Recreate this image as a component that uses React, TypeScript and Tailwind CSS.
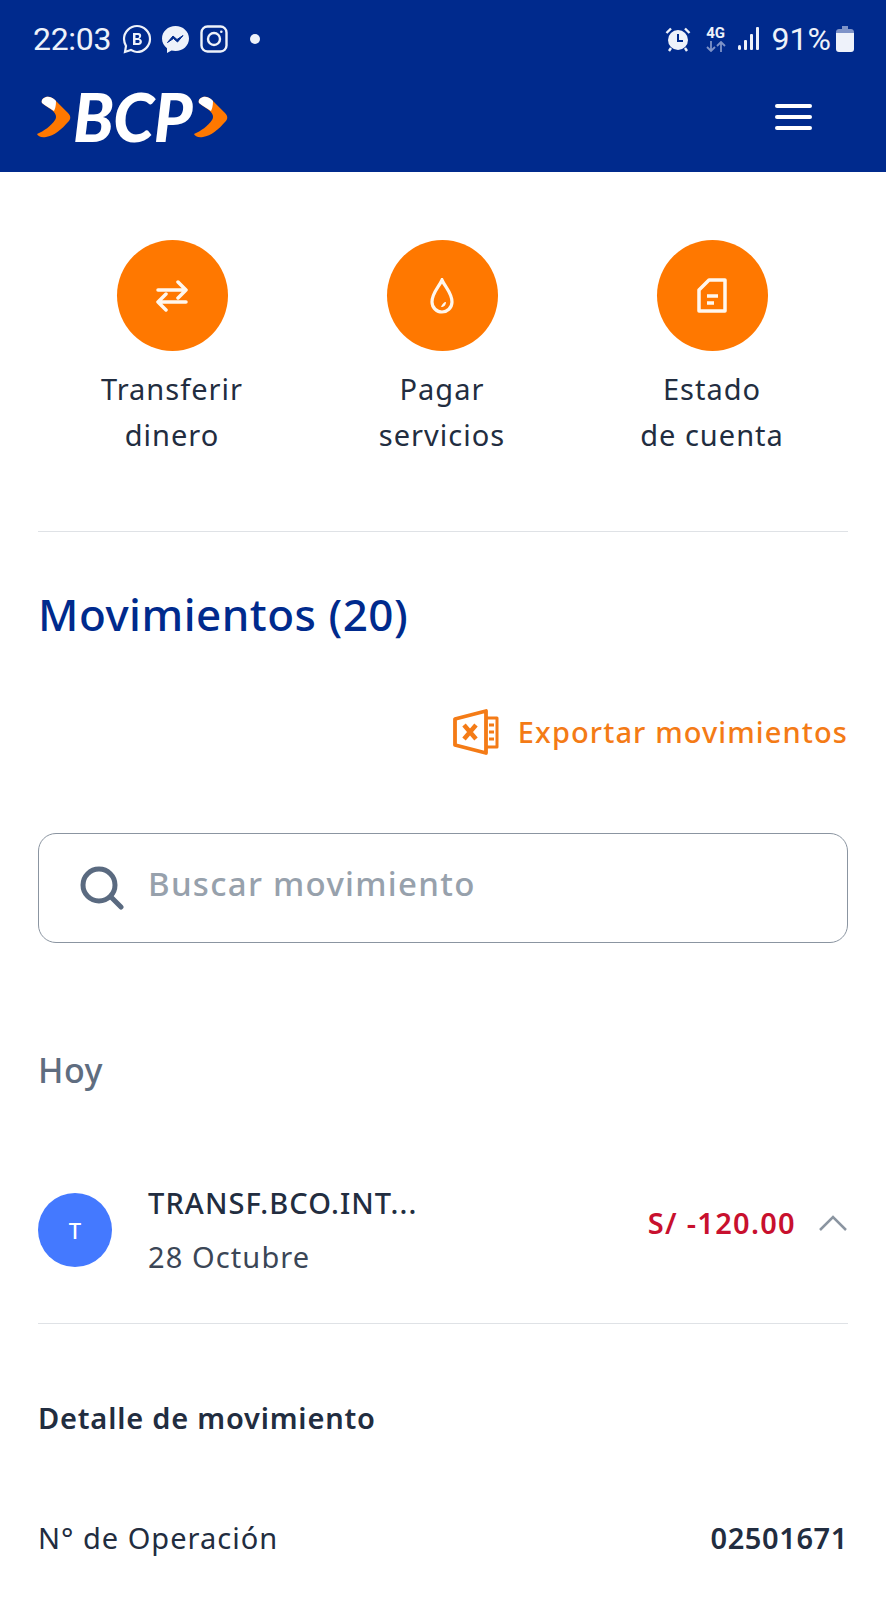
const font = { fontFamily: '"Noto Sans", sans-serif' };

function BcpChevron() {
  return (
    <svg width="34" height="42" viewBox="0 0 34 42" className="block">
      <path d="M9 1 C14 0 17 3 20 6 L31 17 C34 20 34 23 31 26 C25 33 17 40 9 41 C4 42 1 40 0 38 C7 35 14 30 18 24 C20 21 19 18 16 15 C13 12 8 10 5 7 C4 4 6 2 9 1 Z" fill="#ff7800" />
      <path d="M9 1 C14 0 17 3 19 5 C19 10 18 13 17 15 C13 12 8 10 5 7 C4 4 6 2 9 1 Z" fill="#ffffff" />
    </svg>
  );
}

function StatusBar() {
  return (
    <div className="flex h-[80px] items-center justify-between pl-[33px] pr-[32px] pb-[2px] text-[#eef2fa]">
      <div className="flex items-center">
        <span className="text-[32px] leading-none tracking-[-0.3px]" style={{ fontFamily: "Roboto, sans-serif" }}>22:03</span>
        <svg width="30" height="30" viewBox="0 0 30 30" className="ml-[11px]">
          <path d="M15 2 C8 2 2 8 2 15 C2 18 3 20 4 22 L3 28 L9 26 C11 27 13 28 15 28 C22 28 28 22 28 15 C28 8 22 2 15 2 Z" fill="none" stroke="currentColor" strokeWidth="2.2" />
          <path d="M11 9 H16.5 C20 9 20 14 17 14.6 C21 15 21 21 16.5 21 H11 Z M13.5 11 V14 H16 C17.5 14 17.5 11 16 11 Z M13.5 16 V19 H16.5 C18 19 18 16 16.5 16 Z" fill="currentColor" fillRule="evenodd" />
        </svg>
        <svg width="29" height="29" viewBox="0 0 29 29" className="ml-[9px]">
          <path d="M14.5 1 C7 1 1 6.500 1 13.500 C1 17.500 3 21 6 23.300 V28 L10.500 25.500 C11.800 25.800 13 26 14.500 26 C22 26 28 20.500 28 13.500 C28 6.500 22 1 14.500 1 Z" fill="currentColor" />
          <path d="M6.500 17.500 L12 11 L16 14.500 L22 10.500 L16.500 17 L12.500 13.500 Z" fill="#002a8d" stroke="#002a8d" strokeWidth="1" />
        </svg>
        <svg width="28" height="28" viewBox="0 0 28 28" className="ml-[10px]" fill="none" stroke="currentColor" strokeWidth="2.4">
          <rect x="1.500" y="1.500" width="25" height="25" rx="6" />
          <circle cx="14" cy="14" r="6" />
          <circle cx="21.300" cy="6.700" r="1.300" fill="currentColor" stroke="none" />
        </svg>
        <div className="ml-[22px] h-[10px] w-[10px] rounded-full bg-[#eef2fa]" />
      </div>
      <div className="flex items-center">
        <svg width="26" height="26" viewBox="0 0 26 26">
          <circle cx="13" cy="14" r="10" fill="currentColor" />
          <path d="M1.500 7 L6 2.500 M24.500 7 L20 2.500 M6 22 L4 25 M20 22 L22 25" stroke="currentColor" strokeWidth="2.4" />
          <path d="M13 8 V15 H18" fill="none" stroke="#002a8d" strokeWidth="2" />
        </svg>
        <div className="ml-[14px] flex w-[22px] flex-col items-center">
          <span className="text-[15px] font-bold leading-[15px]" style={{ fontFamily: "Roboto, sans-serif" }}>4G</span>
          <svg width="20" height="11" viewBox="0 0 20 11" fill="none" stroke="#7e93c8" strokeWidth="1.800">
            <path d="M5 0 V10 M1 6 L5 10 L9 6" />
            <path d="M15 11 V1 M11 5 L15 1 L19 5" />
          </svg>
        </div>
        <svg width="24" height="26" viewBox="0 0 24 26" className="ml-[10px]" fill="currentColor">
          <rect x="1" y="19" width="3" height="5" rx="1.500" />
          <rect x="7" y="14" width="3" height="10" rx="1" />
          <rect x="13" y="8" width="3" height="16" rx="1" />
          <rect x="19" y="1" width="3" height="23" rx="1" />
        </svg>
        <span className="ml-[11px] text-[32px] leading-none" style={{ fontFamily: "Roboto, sans-serif" }}>91%</span>
        <svg width="18" height="26" viewBox="0 0 18 26" className="ml-[5px]">
          <path d="M6 0 H12 V3 H15 C16.500 3 18 4 18 6 V8 H0 V6 C0 4 1.500 3 3 3 H6 Z" fill="#7e93c8" />
          <path d="M0 7 H18 V23 C18 25 17 26 15 26 H3 C1 26 0 25 0 23 Z" fill="currentColor" />
        </svg>
      </div>
    </div>
  );
}

function Header() {
  return (
    <header className="h-[172px] bg-[#002a8d]">
      <StatusBar />
      <div className="flex h-[74px] items-center justify-between pl-[37px] pr-[74px]">
        <div className="flex items-center">
          <BcpChevron />
          <span className="ml-[2px] pr-[2px] text-[66px] font-black italic leading-none tracking-[-0.5px] text-white" style={{ fontFamily: "Lato, sans-serif" }}>BCP</span>
          <BcpChevron />
        </div>
        <div className="flex w-[37px] flex-col gap-[7px]">
          <div className="h-[4px] rounded-full bg-white" />
          <div className="h-[4px] rounded-full bg-white" />
          <div className="h-[4px] rounded-full bg-white" />
        </div>
      </div>
    </header>
  );
}

function ActionItem({ icon, lines }: { icon: React.ReactNode; lines: string[] }) {
  return (
    <div className="flex w-[230px] flex-col items-center">
      <div className="flex h-[111px] w-[111px] items-center justify-center rounded-full bg-[#ff7800]">{icon}</div>
      <div className="mt-[15px] text-center text-[29px] leading-[46px] tracking-[1px] text-[#222d40]">
        {lines.map((l) => (
          <div key={l}>{l}</div>
        ))}
      </div>
    </div>
  );
}

function Row({ label, value }: { label: string; value: string }) {
  return (
    <div className="flex items-center justify-between text-[29px] text-[#222d40]">
      <span className="tracking-[1px]">{label}</span>
      <span className="font-semibold tracking-[0.6px]">{value}</span>
    </div>
  );
}

export default function App() {
  return (
    <div className="h-[1600px] w-[886px] overflow-hidden bg-white" style={font}>
      <Header />
      <main className="px-[38px]">
        <section className="flex justify-between pl-[19px] pr-[21px] pt-[68px] pb-[73px]">
          <ActionItem
            lines={["Transferir", "dinero"]}
            icon={
              <svg width="32" height="32" viewBox="0 0 32 32" fill="none" stroke="#fff7ee" strokeWidth="3.500" strokeLinecap="round" strokeLinejoin="round">
                <path d="M2 10 H30 M22 2 L30 10 L22 18" />
                <path d="M30 22 H2 M10 14 L2 22 L10 30" />
              </svg>
            }
          />
          <ActionItem
            lines={["Pagar", "servicios"]}
            icon={
              <svg width="24" height="36" viewBox="0 0 24 36" fill="none" stroke="#fff7ee" strokeWidth="3.200">
                <path d="M12 2 C15 9 22 15 22 24 C22 30 17 34 12 34 C7 34 2 30 2 24 C2 15 9 9 12 2 Z" />
                <path d="M11 29 C14 29 16 27 16 24 C14 24 12 26 11 29 Z" fill="#fff7ee" stroke="none" />
              </svg>
            }
          />
          <ActionItem
            lines={["Estado", "de cuenta"]}
            icon={
              <svg width="30" height="35" viewBox="0 0 30 35" fill="none" stroke="#fff7ee" strokeWidth="3.500" strokeLinejoin="round">
                <path d="M12 2 H28 V33 H2 V12 Z" />
                <path d="M10 18 H21 M10 25 H17" />
              </svg>
            }
          />
        </section>
        <div className="h-px bg-[#dfe2e6]" />
        <h1 className="mt-[50px] text-[44px] font-medium leading-[64px] tracking-[0.5px] text-[#002a8d]">Movimientos (20)</h1>
        <div className="mt-[63px] flex items-center justify-end">
          <svg width="46" height="46" viewBox="0 0 46 46" fill="none" stroke="#f47b16" strokeWidth="3.800" strokeLinejoin="round">
            <path d="M2 10 L33 2 V44 L2 36 Z" />
            <path d="M33 9 H44 V38 H33 M36 16 H41 M36 23 H41 M36 30 H41" strokeWidth="3" />
            <path d="M11 16 L23 30 M23 16 L11 30" strokeWidth="4.500" />
          </svg>
          <span className="ml-[19px] text-[29px] font-medium leading-[40px] tracking-[1.1px] text-[#f47b16]">Exportar movimientos</span>
        </div>
        <div className="mt-[78px] flex h-[110px] items-center rounded-[18px] border-[1.5px] border-[#8b95a1] pl-[41px]">
          <svg width="44" height="44" viewBox="0 0 44 44" fill="none" stroke="#5a6a80" strokeWidth="5" strokeLinecap="round">
            <circle cx="19" cy="19" r="16" />
            <path d="M31 31 L41 41" />
          </svg>
          <span className="ml-[24px] pb-[8px] text-[33px] font-medium tracking-[1.3px] text-[#97a1ac]">Buscar movimiento</span>
        </div>
        <div className="mt-[102px] text-[34px] font-medium leading-[50px] tracking-[0.5px] text-[#5f6d80]">Hoy</div>
        <div className="mt-[88px] flex items-center border-b border-[#dfe2e6] pb-[46px]">
          <div className="flex h-[74px] w-[74px] shrink-0 items-center justify-center rounded-full bg-[#4479ff] text-[22px] font-medium text-white">T</div>
          <div className="ml-[36px] flex-1">
            <div className="text-[29px] font-medium leading-[40px] tracking-[1.1px] text-[#222d40]">TRANSF.BCO.INT...</div>
            <div className="mt-[14px] text-[29px] leading-[40px] tracking-[1.1px] text-[#3b4656]">28 Octubre</div>
          </div>
          <div className="mb-[14px] flex items-center">
            <span className="text-[29px] font-semibold tracking-[1.3px] text-[#c8102e]">S/ -120.00</span>
            <svg width="30" height="18" viewBox="0 0 30 18" className="ml-[22px]" fill="none" stroke="#8b95a1" strokeWidth="2.500">
              <path d="M2 16 L15 3 L28 16" />
            </svg>
          </div>
        </div>
        <h2 className="mt-[71px] text-[29px] font-semibold leading-[46px] tracking-[0.8px] text-[#222d40]">Detalle de movimiento</h2>
        <div className="mt-[75px]">
          <Row label="N° de Operación" value="02501671" />
        </div>
      </main>
    </div>
  );
}
